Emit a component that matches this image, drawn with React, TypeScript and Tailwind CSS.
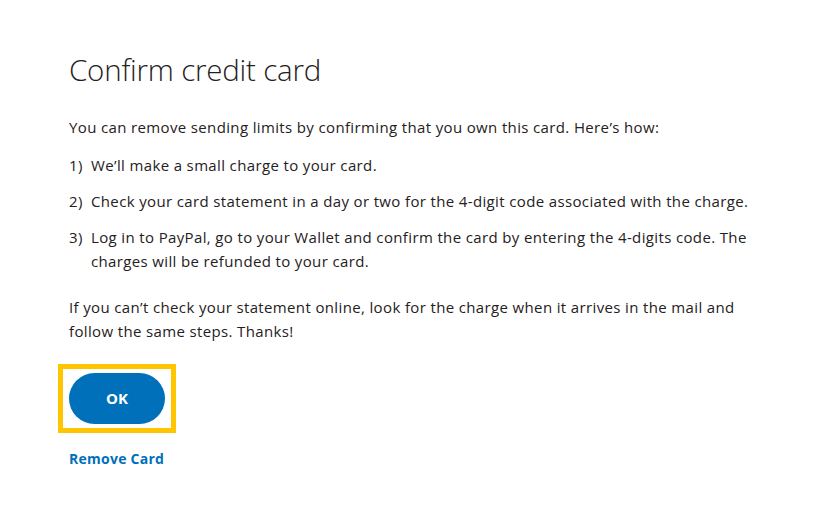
import * as React from "react";

const steps = [
  "We’ll make a small charge to your card.",
  "Check your card statement in a day or two for the 4-digit code associated with the charge.",
  "Log in to PayPal, go to your Wallet and confirm the card by entering the 4-digits code. The charges will be refunded to your card.",
];

export default function App() {
  return (
    <div
      className="min-h-[525px] w-full bg-white text-[#1f2122]"
      style={{ fontFamily: '"Open Sans", "Liberation Sans", sans-serif' }}
    >
      <div className="w-[700px] pl-[69px] pt-[52px] box-content">
        <h1 className="text-[29.5px] font-light leading-[36px] tracking-[-0.2px]">
          Confirm credit card
        </h1>
        <p className="mt-[27px] text-[15px] leading-[24px] tracking-[0.36px]">
          You can remove sending limits by confirming that you own this card. Here’s how:
        </p>
        <ol className="mt-[14px] space-y-[12px] text-[15px] leading-[24px] tracking-[0.36px]">
          {steps.map((s, i) => (
            <li key={i} className="flex">
              <span className="w-[22px] shrink-0">{i + 1})</span>
              <span>{s}</span>
            </li>
          ))}
        </ol>
        <p className="mt-[22px] text-[15px] leading-[24px] tracking-[0.36px]">
          If you can’t check your statement online, look for the charge when it arrives in the mail and follow the same steps. Thanks!
        </p>
        <div className="mt-[21px] -ml-[11px] inline-flex border-[5px] border-[#ffc600] px-[6px] py-[4px]">
          <button className="h-[51px] w-[96px] rounded-full bg-[#0070ba] text-[15px] font-bold text-white">
            OK
          </button>
        </div>
        <div className="mt-[13px]">
          <a className="text-[14px] font-bold tracking-[0.25px] text-[#0070ba]" href="#">
            Remove Card
          </a>
        </div>
      </div>
    </div>
  );
}
